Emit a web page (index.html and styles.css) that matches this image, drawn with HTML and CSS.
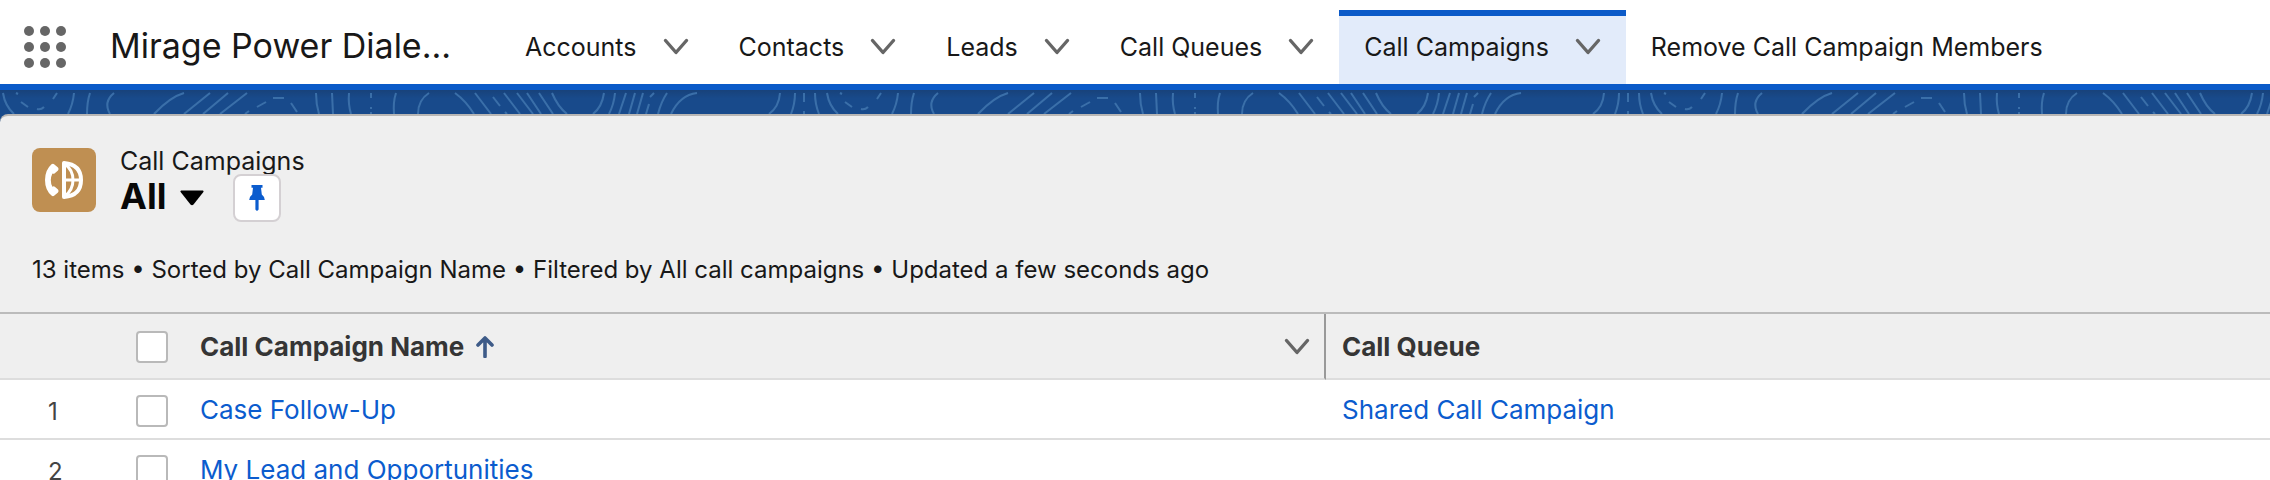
FILE: index.html
```
<!DOCTYPE html>
<html lang="en">
<head>
    <meta charset="UTF-8">
    <meta name="viewport" content="width=device-width, initial-scale=1.0">
    <title>Call Campaigns</title>
    <link rel="stylesheet" href="styles.css">
</head>
<body>

    <!-- shared chevron -->
    <svg class="defs" aria-hidden="true">
        <symbol id="chevron" viewBox="0 0 26 20">
            <path d="M2.5 3.5 L13 15.5 L23.5 3.5" fill="none" stroke="currentColor" stroke-width="3.4" stroke-linecap="round" stroke-linejoin="round"/>
        </symbol>
    </svg>

    <header class="global-nav">
        <button class="app-launcher" aria-label="App Launcher">
            <svg viewBox="0 0 42 42">
                <circle cx="5" cy="5" r="5"/><circle cx="21" cy="5" r="5"/><circle cx="37" cy="5" r="5"/>
                <circle cx="5" cy="21" r="5"/><circle cx="21" cy="21" r="5"/><circle cx="37" cy="21" r="5"/>
                <circle cx="5" cy="37" r="5"/><circle cx="21" cy="37" r="5"/><circle cx="37" cy="37" r="5"/>
            </svg>
        </button>
        <span class="app-name">Mirage Power Diale...</span>
        <nav class="tabs">
            <div class="tab">
                <a href="#">Accounts</a>
                <button class="menu-btn" aria-label="Accounts list"><svg class="chevron"><use href="#chevron"/></svg></button>
            </div>
            <div class="tab">
                <a href="#">Contacts</a>
                <button class="menu-btn" aria-label="Contacts list"><svg class="chevron"><use href="#chevron"/></svg></button>
            </div>
            <div class="tab">
                <a href="#">Leads</a>
                <button class="menu-btn" aria-label="Leads list"><svg class="chevron"><use href="#chevron"/></svg></button>
            </div>
            <div class="tab">
                <a href="#">Call Queues</a>
                <button class="menu-btn" aria-label="Call Queues list"><svg class="chevron"><use href="#chevron"/></svg></button>
            </div>
            <div class="tab active">
                <a href="#">Call Campaigns</a>
                <button class="menu-btn" aria-label="Call Campaigns list"><svg class="chevron"><use href="#chevron"/></svg></button>
            </div>
            <div class="tab">
                <a href="#">Remove Call Campaign Members</a>
            </div>
        </nav>
    </header>

    <main class="stage">
        <svg class="brand-band" aria-hidden="true">
            <defs>
                <linearGradient id="shade" x1="0" y1="0" x2="0" y2="1">
                    <stop offset="0" stop-color="#18427a"/>
                    <stop offset="0.35" stop-color="#184a8b"/>
                </linearGradient>
                <pattern id="contours" width="824" height="30" patternUnits="userSpaceOnUse">
                    <path fill="none" stroke="#3a6fa9" stroke-width="2" d="
                        M3 3 Q5 16 14 24 M16 3 L18 4 M21 12 L28 17 M37 19 Q41 20 44 17 M53 9 L57 3
                        M74 3 Q73 14 68 24 M90 3 Q87 12 87 24 M114 3 Q103 12 110 24
                        M184 3 Q170 7 154 24 M210 3 L184 24 M228 3 L203 24 M247 3 L220 24
                        M245 24 L249 21 M257 17 L266 12 M273 8 L284 8 M291 13 L297 22
                        M316 3 Q316 14 319 24 M332 3 L333 24 M349 3 Q348 14 351 24
                        M371 3 V8 M371 17 V19 M371 22 V24 M396 3 Q393 12 394 24
                        M429 3 Q418 10 418 24 M455 3 Q466 11 474 24 M475 3 L491 24
                        M493 7 L500 16 M505 22 L507 24 M504 3 L520 24 M517 3 L533 24
                        M527 3 L541 24 M539 3 L553 24 M552 3 Q558 17 567 24
                        M604 3 Q602 17 593 24 M615 3 Q614 14 609 24 M626 3 L619 24
                        M635 3 L629 24 M643 3 L637 24 M654 3 L650 7 M649 14 L646 24
                        M667 3 Q661 12 658 24 M697 3 Q680 5 671 24
                        M780 3 Q779 17 769 24 M795 3 Q795 14 791 24
                        M804 3 V12 M804 21 V24 M815 3 Q815 14 819 24"/>
                </pattern>
            </defs>
            <rect width="100%" height="100%" fill="url(#shade)"/>
            <rect width="100%" height="100%" fill="url(#contours)"/>
        </svg>

        <section class="list-view">
            <div class="list-header">
                <div class="object-row">
                    <svg class="object-icon" viewBox="0 0 64 64" aria-hidden="true">
                        <rect width="64" height="64" rx="8" fill="#bf8f52"/>
                        <path fill="#fff" d="M19.5 16.2 Q21 15 22.4 16.4 L26 19.6 Q27.2 21 26 22.4 L22.8 25.2 Q21.6 26.2 20.4 25.4 Q17.2 32 20.4 38.8 Q21.6 37.8 22.8 38.8 L26 41.6 Q27.2 43 26 44.4 L22.4 47.6 Q21 48.8 19.5 47.6 Q13 42 13 32 Q13 22 19.5 16.2 Z"/>
                        <g fill="none" stroke="#fff" stroke-width="3" stroke-linejoin="round">
                            <path stroke-width="4" d="M32 15 V49 Q49 47.5 49 32 Q49 16.5 32 15 Z"/>
                            <path d="M33 16 Q41 22 41 32 Q41 42 33 48 M32 32 H49"/>
                        </g>
                    </svg>
                    <div class="object-text">
                        <p class="object-name">Call Campaigns</p>
                        <div class="view-row">
                            <h1>All</h1>
                            <button class="view-btn" aria-label="Select a List View">
                                <svg viewBox="0 0 24 16"><path d="M1 0.5 H23 Q24 1 23.4 2 L13.5 14.6 Q12 16 10.500 14.6 L0.6 2 Q0 1 1 0.5 Z"/></svg>
                            </button>
                            <button class="pin-btn" aria-label="Pin this list view">
                                <svg viewBox="0 0 16 26"><path d="M2.5 0 H13.5 V2.8 H12 L12.8 9.5 Q15.5 11.5 15.8 15 H9.6 V24.5 Q8 27 6.4 24.5 V15 H0.2 Q0.5 11.5 3.2 9.5 L4 2.8 H2.5 Z"/></svg>
                            </button>
                        </div>
                    </div>
                </div>
                <p class="meta">13 items • Sorted by Call Campaign Name • Filtered by All call campaigns • Updated a few seconds ago</p>
            </div>

            <table>
                <thead>
                    <tr>
                        <th class="num"></th>
                        <th class="check"><input type="checkbox" aria-label="Select all items"></th>
                        <th class="name">
                            <div class="th-inner">
                                <span>Call Campaign Name</span>
                                <svg class="sort-arrow" viewBox="0 0 18 22"><path d="M9 20.5 V3 M2 9 L9 2 L16 9" fill="none" stroke="#3e5b88" stroke-width="3.6" stroke-linecap="round" stroke-linejoin="round"/></svg>
                                <button class="menu-btn" aria-label="Show Call Campaign Name column actions"><svg class="chevron"><use href="#chevron"/></svg></button>
                            </div>
                        </th>
                        <th class="queue">Call Queue</th>
                    </tr>
                </thead>
                <tbody>
                    <tr>
                        <td class="num">1</td>
                        <td class="check"><input type="checkbox" aria-label="Select item 1"></td>
                        <td class="name"><a href="#">Case Follow-Up</a></td>
                        <td class="queue"><a href="#">Shared Call Campaign</a></td>
                    </tr>
                    <tr>
                        <td class="num">2</td>
                        <td class="check"><input type="checkbox" aria-label="Select item 2"></td>
                        <td class="name"><a href="#">My Lead and Opportunities</a></td>
                        <td class="queue"></td>
                    </tr>
                </tbody>
            </table>
        </section>
    </main>

</body>
</html>
```
FILE: styles.css
```
* {
    box-sizing: border-box;
}

body {
    margin: 0;
    height: 100vh;
    overflow: hidden;
    font-family: Inter, "Liberation Sans", sans-serif;
    font-size: 26px;
    line-height: 32px;
    color: #181818;
    background-color: #fff;
}

p, h1 {
    margin: 0;
}

a {
    color: #0b5cce;
    text-decoration: none;
}

button {
    display: flex;
    align-items: center;
    justify-content: center;
    padding: 0;
    border: none;
    background: none;
    cursor: pointer;
}

.defs {
    display: none;
}

.chevron {
    display: block;
    width: 26px;
    height: 20px;
    color: #666;
}

/* Navigation */
.global-nav {
    display: flex;
    height: 90px;
    padding: 10px 24px 0;
    border-bottom: 6px solid #0b5ac8;
}

.app-launcher svg {
    width: 42px;
    height: 42px;
    fill: #666;
}

.app-name {
    width: 390px;
    margin-left: 44px;
    font-size: 34px;
    line-height: 72px;
    white-space: nowrap;
}

.tabs {
    display: flex;
    font-size: 25px;
}

.tab {
    display: flex;
    align-items: center;
    gap: 26px;
    padding: 0 25px;
    white-space: nowrap;
}

.tab a {
    color: #181818;
}

.tab.active {
    background-color: #e2ebfa;
    box-shadow: inset 0 6px 0 #0b5ac8;
}

/* Brand band */
.stage {
    background-color: #184a8b;
}

.brand-band {
    display: block;
    width: 100%;
    height: 24px;
}

/* List view */
.list-view {
    border-top: 2px solid #b9b7b5;
    border-radius: 8px 0 0 0;
    background-color: #efefef;
}

.list-header {
    padding: 32px 32px 26px;
}

.object-row {
    display: flex;
    align-items: flex-start;
    gap: 24px;
}

.object-icon {
    width: 64px;
    height: 64px;
}

.object-name {
    font-size: 25px;
    line-height: 26px;
}

.view-row {
    display: flex;
    align-items: center;
    height: 48px;
}

h1 {
    padding-bottom: 4px;
    font-size: 36px;
    line-height: 42px;
    font-weight: 700;
    color: #080808;
}

.view-btn {
    margin-left: 14px;
}

.view-btn svg {
    width: 24px;
    height: 16px;
}

.pin-btn {
    width: 48px;
    height: 48px;
    margin-left: 29px;
    border: 2px solid #d4d0d3;
    border-radius: 8px;
    background-color: #fff;
}

.pin-btn svg {
    width: 16px;
    height: 26px;
    fill: #0b5cce;
}

.meta {
    margin-top: 32px;
    font-size: 24px;
}

/* Table */
table {
    width: 100%;
    table-layout: fixed;
    border-collapse: separate;
    border-spacing: 0;
    border-top: 2px solid #bbb;
    background-color: #fff;
}

th, td {
    padding: 2px 0 0;
    text-align: left;
    border-bottom: 2px solid #ddd;
}

th {
    height: 66px;
    font-weight: 700;
    color: #353535;
    background-color: #efefef;
}

td {
    height: 60px;
}

th.num {
    width: 136px;
}

td.num {
    padding: 6px 0 0 48px;
    font-size: 24px;
    color: #444;
}

.check {
    width: 64px;
}

th.name {
    width: 1126px;
    border-right: 2px solid #999;
}

.queue {
    padding-left: 16px;
}

.th-inner {
    display: flex;
    align-items: center;
    padding-right: 14px;
}

.th-inner .menu-btn {
    margin-left: auto;
}

.sort-arrow {
    width: 18px;
    height: 22px;
    margin-left: 12px;
}

input[type="checkbox"] {
    appearance: none;
    display: block;
    width: 32px;
    height: 32px;
    margin: 0;
    border: 2px solid #b9b9b9;
    border-radius: 4px;
    background-color: #fff;
}

td input[type="checkbox"] {
    margin-top: 2px;
}
```
